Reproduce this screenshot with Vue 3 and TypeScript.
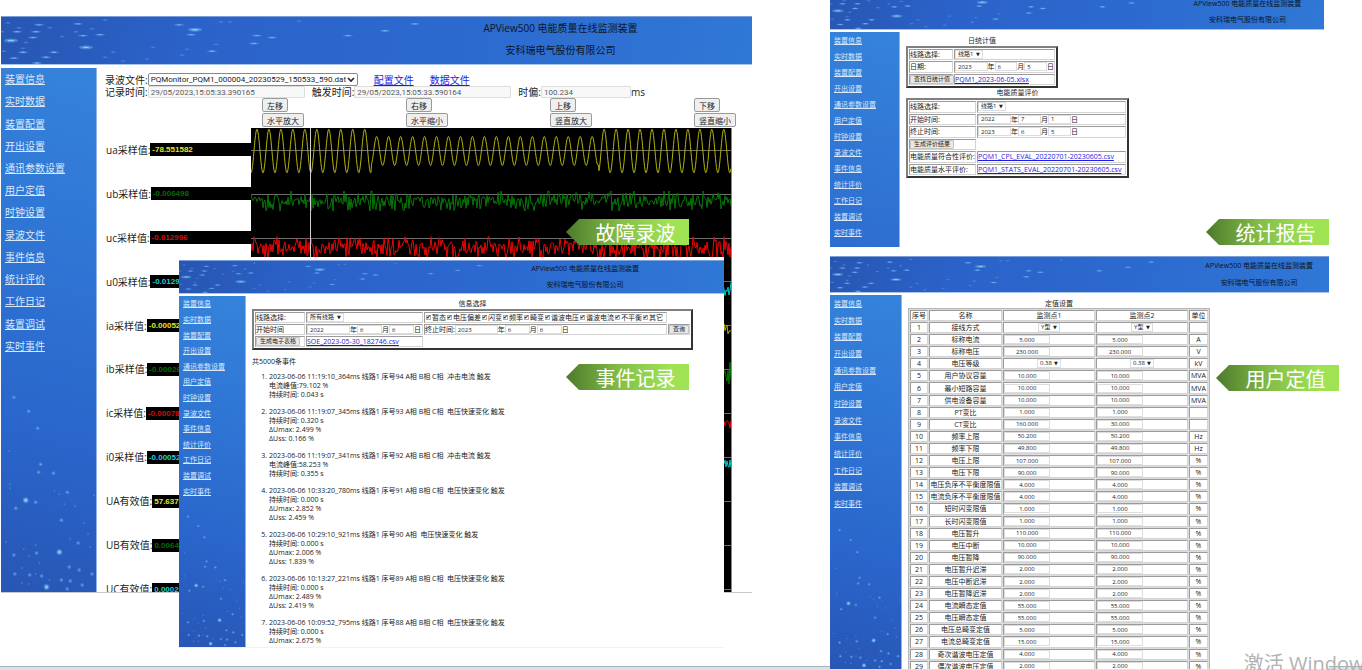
<script setup lang="ts">
type ScreenId = 'record' | 'events' | 'report' | 'settings'

interface Screen {
  id: ScreenId
  caption: string
  skyBox: string
  navBox: string
}

const screens: Screen[] = [
  { id: 'record', caption: '故障录波', skyBox: '0 0 751 48', navBox: '0 0 96 525' },
  { id: 'events', caption: '事件记录', skyBox: '0 0 751 48', navBox: '0 0 96 525' },
  { id: 'report', caption: '统计报告', skyBox: '0 10 629 38', navBox: '0 0 96 287' },
  { id: 'settings', caption: '用户定值', skyBox: '0 0 643 48', navBox: '0 0 96 525' },
]

const navItems = [
  '装置信息', '实时数据', '装置配置', '开出设置', '通讯参数设置', '用户定值', '时钟设置',
  '录波文件', '事件信息', '统计评价', '工作日记', '装置调试', '实时事件',
]

// x, y, size class (1 faint, 2 medium, 3 bright)
const skyDots: number[][] = [
  [7, 6, 1], [38, 8, 2], [18, 11, 1], [49, 11, 1], [1, 15, 1], [16, 15, 2], [35, 15, 2], [32, 21, 2],
  [10, 24, 3], [25, 26, 1], [3, 35, 1], [22, 32, 1], [22, 36, 2], [13, 42, 2], [45, 41, 2], [53, 36, 2],
  [36, 47, 2], [61, 20, 1], [77, 7, 2], [75, 15, 1], [82, 19, 2], [91, 12, 1], [99, 18, 2], [104, 3, 1],
  [85, 31, 3], [112, 36, 1], [104, 41, 1], [122, 45, 1], [146, 43, 1], [152, 31, 1], [178, 8, 2],
  [194, 13, 3], [190, 18, 2], [186, 33, 1], [181, 39, 1], [211, 35, 2], [215, 28, 1], [220, 5, 1],
  [229, 5, 1], [253, 27, 2], [256, 19, 2], [271, 21, 2], [298, 4, 1], [347, 19, 2], [384, 14, 2], [414, 7, 2],
]

const navDots: number[][] = [
  [13, 330, 2], [28, 344, 2], [37, 361, 2], [8, 384, 1], [40, 397, 2], [38, 405, 2], [53, 406, 2],
  [9, 417, 1], [9, 421, 1], [54, 424, 1], [59, 427, 1], [67, 425, 2], [94, 428, 1], [25, 433, 3],
  [35, 435, 2], [15, 441, 2], [64, 437, 1], [75, 439, 1], [61, 453, 2], [84, 456, 1], [88, 467, 1],
  [5, 475, 1], [35, 478, 1], [23, 482, 1], [13, 488, 2], [28, 489, 1], [36, 486, 2], [59, 485, 3],
  [70, 472, 1], [78, 476, 2], [90, 480, 1], [39, 496, 1], [69, 500, 2], [79, 503, 2], [92, 507, 2],
  [21, 501, 1], [14, 507, 2], [29, 508, 2], [35, 507, 1], [41, 509, 2], [49, 513, 1], [61, 513, 2],
  [70, 514, 2], [21, 516, 1], [28, 517, 1], [46, 520, 3], [82, 518, 2], [67, 522, 2],
]

const moves = ['左移', '右移', '上移', '下移']
const zooms = ['水平放大', '水平缩小', '竖直放大', '竖直缩小']

const channels = [
  { name: 'ua采样值:', value: '-78.551582', tone: 'yellow' },
  { name: 'ub采样值:', value: '-0.006498', tone: 'green' },
  { name: 'uc采样值:', value: '-0.012996', tone: 'red' },
  { name: 'u0采样值:', value: '-0.012996', tone: 'cyan' },
  { name: 'ia采样值:', value: '-0.000525', tone: 'yellow' },
  { name: 'ib采样值:', value: '-0.000262', tone: 'green' },
  { name: 'ic采样值:', value: '-0.000787', tone: 'red' },
  { name: 'i0采样值:', value: '-0.000525', tone: 'cyan' },
  { name: 'UA有效值:', value: '57.637878', tone: 'yellow' },
  { name: 'UB有效值:', value: '0.006498', tone: 'green' },
  { name: 'UC有效值:', value: '0.000262', tone: 'cyan' },
]

const axes = [22, 66, 110, 153, 197, 241, 285, 329, 373, 417, 461]

function sineTrace(): string {
  let d = ''
  for (let x = 0; x <= 480; x += 0.5) {
    const amp = x > 120 && x < 348 ? 14.5 : 21.8
    const y = 23 - amp * Math.cos((x * 2 * Math.PI) / 11.97)
    d += `${d ? 'L' : 'M'}${x} ${(46 - y).toFixed(1)}`
  }
  return d
}

function noiseTrace(center: number, spread: number, seed: number): string {
  let s = seed
  const next = () => {
    s = (s * 16807) % 2147483647
    return s / 2147483647
  }
  let d = ''
  for (let x = 0; x <= 480; x += 1) {
    const k = next() + next() + next() - 1.5
    const y = Math.max(-1, Math.min(1, k)) * spread * 1.25 + center
    d += `${d ? 'L' : 'M'}${x} ${y.toFixed(1)}`
  }
  return d
}

const traces = [
  { tone: 'yellow', d: sineTrace() },
  { tone: 'green', d: noiseTrace(73, 8, 11) },
  { tone: 'red', d: noiseTrace(120, 9, 29) },
  { tone: 'cyan', d: noiseTrace(163, 7, 37) },
  { tone: 'yellow', d: noiseTrace(201, 8, 53) },
  { tone: 'green', d: noiseTrace(244, 10, 71) },
  { tone: 'red', d: noiseTrace(298, 5, 97) },
  { tone: 'cyan', d: noiseTrace(336, 8, 113) },
]

const eventKinds = ['暂态', '电压偏差', '闪变', '频率', '畸变', '谐波电压', '谐波电流', '不平衡', '其它']

const events = [
  { head: '2023-06-06 11:19:10_364ms 线路1 序号94 A相 B相 C相\u00a0 冲击电流 触发', lines: ['电流峰值:79.102 %', '持续时间: 0.043 s'] },
  { head: '2023-06-06 11:19:07_345ms 线路1 序号93 A相 B相 C相\u00a0 电压快速变化 触发', lines: ['持续时间: 0.320 s', 'ΔUmax: 2.499 %', 'ΔUss: 0.166 %'] },
  { head: '2023-06-06 11:19:07_341ms 线路1 序号92 A相 B相 C相\u00a0 冲击电流 触发', lines: ['电流峰值:58.253 %', '持续时间: 0.355 s'] },
  { head: '2023-06-06 10:33:20_780ms 线路1 序号91 A相 B相 C相\u00a0 电压快速变化 触发', lines: ['持续时间: 0.000 s', 'ΔUmax: 2.852 %', 'ΔUss: 2.459 %'] },
  { head: '2023-06-06 10:29:10_921ms 线路1 序号90 A相\u00a0 电压快速变化 触发', lines: ['持续时间: 0.000 s', 'ΔUmax: 2.006 %', 'ΔUss: 1.839 %'] },
  { head: '2023-06-06 10:13:27_221ms 线路1 序号89 A相 B相 C相\u00a0 电压快速变化 触发', lines: ['持续时间: 0.000 s', 'ΔUmax: 2.489 %', 'ΔUss: 2.419 %'] },
  { head: '2023-06-06 10:09:52_795ms 线路1 序号88 A相 B相 C相\u00a0 电压快速变化 触发', lines: ['持续时间: 0.000 s', 'ΔUmax: 2.675 %'] },
]

const periodRows = [
  { name: '开始时间:', y: '2022', m: '7', d: '1' },
  { name: '终止时间:', y: '2023', m: '6', d: '5' },
]

type Setting = [name: string, first: string, second: string, unit: string]

const settings: Setting[] = [
  ['接线方式', 'Y型', 'Y型', ''],
  ['标称电流', '5.000', '5.000', 'A'],
  ['标称电压', '230.000', '230.000', 'V'],
  ['电压等级', '0.38', '0.38', 'kV'],
  ['用户协议容量', '10.000', '10.000', 'MVA'],
  ['最小短路容量', '10.000', '10.000', 'MVA'],
  ['供电设备容量', '10.000', '10.000', 'MVA'],
  ['PT变比', '1.000', '1.000', ''],
  ['CT变比', '160.000', '30.000', ''],
  ['频率上限', '50.200', '50.200', 'Hz'],
  ['频率下限', '49.800', '49.800', 'Hz'],
  ['电压上限', '107.000', '107.000', '%'],
  ['电压下限', '90.000', '90.000', '%'],
  ['电压负序不平衡度限值', '4.000', '4.000', '%'],
  ['电流负序不平衡度限值', '4.000', '4.000', '%'],
  ['短时闪变限值', '1.000', '1.000', '%'],
  ['长时闪变限值', '1.000', '1.000', '%'],
  ['电压暂升', '110.000', '110.000', '%'],
  ['电压中断', '10.000', '10.000', '%'],
  ['电压暂降', '90.000', '90.000', '%'],
  ['电压暂升迟滞', '2.000', '2.000', '%'],
  ['电压中断迟滞', '2.000', '2.000', '%'],
  ['电压暂降迟滞', '2.000', '2.000', '%'],
  ['电流瞬态定值', '55.000', '55.000', '%'],
  ['电压瞬态定值', '55.000', '55.000', '%'],
  ['电压总畸变定值', '5.000', '5.000', '%'],
  ['电流总畸变定值', '15.000', '15.000', '%'],
  ['奇次谐波电压定值', '4.000', '4.000', '%'],
  ['偶次谐波电压定值', '2.000', '2.000', '%'],
]

const isChoice = (name: string): boolean => name === '接线方式' || name === '电压等级'
</script>

<template>
  <div class="desk">
    <div class="taskbar"></div>
    <section v-for="s in screens" :key="s.id" class="screen" :class="s.id">
      <header class="banner">
        <svg class="sparks" :viewBox="s.skyBox" preserveAspectRatio="none" aria-hidden="true">
          <g v-for="(p, i) in skyDots" :key="i" :class="'lum' + p[2]">
            <ellipse :cx="p[0]" :cy="p[1]" :rx="p[2] * 2 + 1" :ry="p[2] === 3 ? 2 : 1" opacity="0.4" />
            <ellipse :cx="p[0]" :cy="p[1]" :rx="p[2] + 0.5" ry="0.7" />
          </g>
        </svg>
        <div class="title">
          <p>APView500 电能质量在线监测装置</p>
          <p>安科瑞电气股份有限公司</p>
        </div>
      </header>

      <div class="body">
        <nav class="side">
          <svg class="sparks" :viewBox="s.navBox" preserveAspectRatio="none" aria-hidden="true">
            <g v-for="(p, i) in navDots" :key="i" :class="'lum' + p[2]">
              <circle :cx="p[0]" :cy="p[1]" :r="p[2] === 3 ? 3 : p[2]" opacity="0.35" />
              <circle :cx="p[0]" :cy="p[1]" :r="p[2] === 3 ? 1.6 : 0.8" />
            </g>
          </svg>
          <ul>
            <li v-for="n in navItems" :key="n"><a href="#">{{ n }}</a></li>
          </ul>
        </nav>

        <main v-if="s.id === 'record'" class="content">
          <div class="line">
            <label for="wave-file">录波文件:</label>
            <span class="pick wide">
              <select id="wave-file"><option>PQMonitor_PQM1_000004_20230529_150533_590.dat</option></select>
              <svg viewBox="0 0 8 6" aria-hidden="true"><path d="M1 1l3 3 3-3" fill="none" stroke="#222" stroke-width="1.6" /></svg>
            </span>
            <a href="#" class="file">配置文件</a>
            <a href="#" class="file">数据文件</a>
          </div>
          <div class="line times">
            <label for="t-rec">记录时间:</label><input id="t-rec" class="stamp" value="29/05/2023,15:05:33.390165" disabled />
            <label for="t-trig">触发时间:</label><input id="t-trig" class="stamp" value="29/05/2023,15:05:33.590164" disabled />
            <label for="t-off">时偏:</label><input id="t-off" class="stamp short" value="100.234" disabled /><span>ms</span>
          </div>
          <div class="keys">
            <div v-for="m in moves" :key="m"><button type="button">{{ m }}</button></div>
            <div v-for="z in zooms" :key="z"><button type="button">{{ z }}</button></div>
          </div>
          <div class="scope">
            <div class="readouts">
              <div v-for="c in channels" :key="c.name" class="readout">
                <span>{{ c.name }}</span><b :class="c.tone">{{ c.value }}</b>
              </div>
            </div>
            <svg class="plot" viewBox="0 0 480 465" preserveAspectRatio="none" aria-hidden="true">
              <path v-for="a in axes" :key="a" :d="`M0 ${a}.5H480`" class="axis" />
              <path v-for="(t, i) in traces" :key="i" :d="t.d" class="trace" :class="t.tone" />
              <path d="M59.5 0V465" class="cursor" />
            </svg>
          </div>
        </main>

        <main v-else-if="s.id === 'events'" class="content">
          <table class="form">
            <caption>信息选择</caption>
            <tbody>
              <tr>
                <td class="c1"><label for="ev-line">线路选择:</label></td>
                <td class="c2">
                  <span class="pick"><select id="ev-line"><option>所有线路</option></select><i>▼</i></span>
                </td>
                <td>
                  <div class="checks">
                    <label v-for="k in eventKinds" :key="k"><input type="checkbox" checked />{{ k }}</label>
                  </div>
                </td>
                <td class="c4 none"></td>
              </tr>
              <tr>
                <td>开始时间</td>
                <td>
                  <div class="date">
                    <input class="yr" aria-label="开始年" value="2022" />年<input aria-label="开始月" value="6" />月<input aria-label="开始日" value="6" />日
                  </div>
                </td>
                <td>
                  <div class="date">
                    终止时间:<input class="yr" aria-label="终止年" value="2023" />年<input aria-label="终止月" value="6" />月<input aria-label="终止日" value="6" />日
                  </div>
                </td>
                <td><button type="button">查询</button></td>
              </tr>
              <tr>
                <td><button type="button">生成电子表格</button></td>
                <td><a href="#">SOE_2023-05-30_182746.csv</a></td>
                <td class="none"></td>
                <td class="none"></td>
              </tr>
            </tbody>
          </table>
          <p class="total">共5000条事件</p>
          <ol class="log">
            <li v-for="e in events" :key="e.head">
              <div>{{ e.head }}</div>
              <div v-for="l in e.lines" :key="l">{{ l }}</div>
            </li>
          </ol>
        </main>

        <main v-else-if="s.id === 'report'" class="content">
          <table class="form daily">
            <caption>日统计值</caption>
            <tbody>
              <tr>
                <td class="c1"><label for="day-line">线路选择:</label></td>
                <td><span class="pick"><select id="day-line"><option>线路1</option></select><i>▼</i></span></td>
              </tr>
              <tr>
                <td>日期:</td>
                <td>
                  <div class="date"><input class="yr" aria-label="年" value="2023" />年<input aria-label="月" value="6" />月<input aria-label="日" value="5" />日</div>
                </td>
              </tr>
              <tr>
                <td><button type="button">查找日统计值</button></td>
                <td><a href="#">PQM1_2023-06-05.xlsx</a></td>
              </tr>
            </tbody>
          </table>
          <table class="form quality">
            <caption>电能质量评价</caption>
            <tbody>
              <tr>
                <td class="c1"><label for="q-line">线路选择:</label></td>
                <td><span class="pick"><select id="q-line"><option>线路1</option></select><i>▼</i></span></td>
              </tr>
              <tr v-for="r in periodRows" :key="r.name">
                <td>{{ r.name }}</td>
                <td>
                  <div class="date">
                    <input class="yr" :aria-label="r.name + '年'" :value="r.y" />年<input :aria-label="r.name + '月'" :value="r.m" />月<input :aria-label="r.name + '日'" :value="r.d" />日
                  </div>
                </td>
              </tr>
              <tr>
                <td><button type="button">生成评价结果</button></td>
                <td class="none"></td>
              </tr>
              <tr>
                <td>电能质量符合性评价:</td>
                <td><a href="#">PQM1_CPL_EVAL_20220701-20230605.csv</a></td>
              </tr>
              <tr>
                <td>电能质量水平评价:</td>
                <td><a href="#">PQM1_STATS_EVAL_20220701-20230605.csv</a></td>
              </tr>
            </tbody>
          </table>
        </main>

        <main v-else class="content">
          <table class="values">
            <caption>定值设置</caption>
            <colgroup><col class="w1" /><col class="w2" /><col class="w3" /><col class="w3" /><col class="w4" /></colgroup>
            <thead>
              <tr><th>序号</th><th>名称</th><th>监测点1</th><th>监测点2</th><th>单位</th></tr>
            </thead>
            <tbody>
              <tr v-for="(r, i) in settings" :key="r[0]">
                <td>{{ i + 1 }}</td>
                <td>{{ r[0] }}</td>
                <td v-for="n in 2" :key="n" :class="{ entry: !isChoice(r[0]) }">
                  <span v-if="isChoice(r[0])" class="pick">
                    <select :aria-label="r[0] + n"><option>{{ r[n] }}</option></select><i>▼</i>
                  </span>
                  <input v-else :aria-label="r[0] + n" :value="r[n]" />
                </td>
                <td>{{ r[3] }}</td>
              </tr>
            </tbody>
          </table>
        </main>
      </div>
    </section>

    <div v-for="s in screens" :key="s.id" class="ribbon" :class="'tag-' + s.id">{{ s.caption }}</div>
    <div class="watermark">激活 Windows</div>
  </div>
</template>

<style>
body {
  margin: 0;
  background: #fff;
}
</style>

<style scoped>
* {
  box-sizing: border-box;
}

.desk {
  position: relative;
  display: grid;
  grid-template-columns: 830fr 532fr;
  grid-template-rows: 247px minmax(0, 1fr);
  height: 100vh;
  overflow: hidden;
  background: #fff;
  color: #222;
  font-family: "Open Sans", "Noto Sans CJK SC", sans-serif;
}

.taskbar {
  position: absolute;
  left: 0;
  right: 0;
  bottom: 0;
  height: 4px;
  background: #dbe1e8;
  border-top: 1px solid #a9b0b8;
}

.screen {
  position: relative;
  display: flex;
  flex-direction: column;
  overflow: hidden;
  background: #fff;
  font-size: 7px;
  line-height: 9px;
}

.record {
  grid-area: 1 / 1 / 3 / 2;
  align-self: start;
  height: 577px;
  margin: 16px 78px 0 1px;
  font-size: 10px;
  line-height: 12px;
  border-bottom: 1px solid #c8c8c8;
}

.events {
  grid-area: 1 / 1 / 3 / 2;
  align-self: start;
  height: 391px;
  margin: 257px 106px 0 179px;
  padding-top: 3px;
  border-bottom: 1px solid #f2f2f2;
}

.report {
  grid-area: 1 / 2 / 2 / 3;
  margin-right: 38px;
}

.settings {
  grid-area: 2 / 2 / 3 / 3;
  margin: 9px 33px 1px 0;
}

.banner {
  position: relative;
  flex: none;
  height: 49px;
  background: linear-gradient(100deg, #2856b3, #2b62c9 25%, #2c69cf 60%, #3078d6);
  border-top: 1px solid #7d9fd8;
  border-bottom: 1px solid #a9c4ec;
}

.events .banner {
  height: 34px;
}

.report .banner {
  height: 30px;
  border-top: 0;
}

.settings .banner {
  height: 37px;
}

.sparks {
  position: absolute;
  inset: 0;
  width: 100%;
  height: 100%;
}

.lum1 {
  fill: #5596e0;
  opacity: 0.7;
}

.lum2 {
  fill: #66b2ee;
}

.lum3 {
  fill: #7fd0f8;
}

.title {
  position: relative;
  padding-left: 49%;
  text-align: center;
  color: #0c1526;
}

.title p {
  margin: 0;
  line-height: 22px;
}

.events .title p {
  line-height: 16px;
}

.report .title {
  padding-left: 69%;
  margin-top: -4px;
}

.report .title p {
  line-height: 16px;
}

.settings .title {
  padding-left: 72%;
}

.settings .title p {
  line-height: 17px;
}

.body {
  display: flex;
  flex: 1;
  min-height: 0;
  margin-top: 3px;
}

.report .body,
.settings .body,
.events .body {
  margin-top: 2px;
}

.side {
  position: relative;
  flex: none;
  width: 96px;
  background: linear-gradient(195deg, #3583da, #2f75d4 35%, #2a65cb 70%, #2856b5);
  border-right: 1px solid #8fb4e8;
}

.events .side {
  width: 67px;
}

.report .side {
  width: 70px;
  background: linear-gradient(195deg, #3583da, #2d6dd0);
}

.settings .side {
  width: 72px;
}

.side ul {
  position: relative;
  display: grid;
  grid-auto-rows: 1fr;
  align-items: center;
  height: 289px;
  margin: 0;
  padding: 0 0 0 4px;
  list-style: none;
}

.side a {
  color: #d9e8fb;
}

.events .side ul {
  height: 203px;
}

.report .side ul {
  height: 208px;
}

.settings .side ul {
  height: 217px;
}

.content {
  flex: 1;
  min-width: 0;
}

a {
  color: #1d1de0;
}

input,
select,
button {
  margin: 0;
  font-family: inherit;
  font-size: 6px;
  line-height: 8px;
  color: #222;
}

input {
  min-width: 0;
  height: 9px;
  padding: 0 2px;
  border: 1px solid #ddd;
  background: #fff;
}

button {
  height: 9px;
  padding: 0 3px;
  border: 1px solid #c4c4c4;
  border-radius: 1px;
  background: #e8e8e8;
  white-space: nowrap;
  line-height: 7px;
}

.pick {
  display: inline-flex;
  align-items: center;
  height: 9px;
  padding: 0 2px;
  border: 1px solid #ddd;
  background: #fff;
  vertical-align: top;
}

.pick select {
  appearance: none;
  padding: 0;
  border: 0;
  background: transparent;
  line-height: 7px;
}

.pick i {
  margin-left: 2px;
  font: 5px/7px "DejaVu Sans", sans-serif;
}

/* waveform screen */
.line {
  display: flex;
  align-items: center;
  height: 13px;
  padding-left: 8px;
}

.record .line:first-child {
  margin-top: 5px;
}

.record .times {
  height: 12px;
}

.wide {
  width: 210px;
  height: 13px;
  justify-content: space-between;
  border: 1px solid #888;
  border-radius: 2px;
}

.pick.wide select {
  font-family: Roboto, sans-serif;
  font-size: 8px;
  line-height: 11px;
}

.wide svg {
  flex: none;
  width: 8px;
  height: 6px;
}

.file {
  margin-left: 16px;
}

.stamp {
  width: 157px;
  height: 12px;
  margin-right: 7px;
  font-family: Roboto, sans-serif;
  font-size: 8px;
  background: #f8f8f8;
  border-radius: 1px;
  color: #5a5a5a;
}

.short {
  width: 90px;
  margin-right: 0;
}

.keys {
  display: grid;
  grid-template-columns: repeat(3, 144fr) 58fr;
  grid-auto-rows: 15px;
  padding-left: 165px;
}

.keys div {
  display: flex;
}

.keys button {
  height: 14px;
  padding: 0 4px;
  border-color: #9a9a9a;
  border-radius: 2px;
  background: #efefef;
  font-size: 8px;
  line-height: 11px;
}

.scope {
  display: flex;
  padding: 0 20px 0 9px;
}

.readouts {
  display: grid;
  grid-auto-rows: 1fr;
  flex: none;
  width: 145px;
  height: 483px;
  align-items: center;
}

.readout {
  display: flex;
  align-items: center;
}

.readout b {
  flex: 1;
  height: 13px;
  padding-left: 2px;
  background: #000;
  font: bold 8px/13px "Liberation Sans", sans-serif;
}

b.yellow {
  color: #e6e61e;
}

b.green {
  color: #056b05;
}

b.red {
  color: #d80c0c;
}

b.cyan {
  color: #1ccfd8;
}

.plot {
  flex: 1;
  min-width: 0;
  height: 465px;
  background: #000;
  border-right: 1px solid #888;
}

.axis {
  stroke: #6e6e6e;
}

.cursor {
  stroke: #d0d0d0;
}

.trace {
  fill: none;
  stroke-width: 1;
}

.trace.yellow {
  stroke: #b3b30a;
}

.trace.green {
  stroke: #067806;
}

.trace.red {
  stroke: #ee0505;
}

.trace.cyan {
  stroke: #0cc;
}

/* form tables */
table {
  border-spacing: 1px;
  border-collapse: separate;
}

caption {
  height: 10px;
  line-height: 10px;
  white-space: nowrap;
}

td,
th {
  padding: 0;
  font-weight: normal;
  white-space: nowrap;
  border: 1px solid;
  border-color: #9b9b9b #d4d4d4 #d4d4d4 #9b9b9b;
}

.form {
  table-layout: fixed;
  border: 2px solid;
  border-color: #808080 #333 #333 #808080;
}

.form td {
  height: 11px;
}

.form td > a,
.form td > button {
  display: block;
}

.form td.none {
  border-color: transparent;
}

.events .form {
  width: 441px;
  margin: 3px 0 0 6px;
}

.events .c1 {
  width: 50px;
}

.events .c2 {
  width: 117px;
}

.events .c4 {
  width: 22px;
}

.date {
  display: flex;
  align-items: center;
}

.date input {
  width: 25px;
}

.date .yr {
  width: 43px;
}

.checks {
  display: flex;
  align-items: center;
}

.checks label {
  display: flex;
  align-items: center;
}

.checks input {
  position: relative;
  appearance: none;
  width: 5px;
  height: 5px;
  margin: 0 1px;
  padding: 0;
  border: 1px solid #b0b0b0;
}

.checks input:checked::after {
  content: "✔";
  position: absolute;
  left: -1px;
  top: -2px;
  font: 6px/6px "DejaVu Sans", sans-serif;
}

.total {
  margin: 7px 0 0 6px;
}

.log {
  margin: 6px 0 0;
  padding: 0 0 0 23px;
}

.log li {
  margin-bottom: 8px;
}

/* report screen */
.report .form {
  margin-left: 6px;
}

.report .date input {
  width: 23px;
}

.report .date .yr {
  width: 33px;
}

.daily {
  width: 152px;
  height: 42px;
  margin-top: 4px;
}

.daily .c1 {
  width: 44px;
}

.quality {
  width: 223px;
  height: 80px;
}

.quality .c1 {
  width: 67px;
}

/* settings screen */
.values {
  width: 302px;
  height: 366px;
  margin: 4px 0 0 6px;
  table-layout: fixed;
  text-align: center;
  border: 1px solid #b5b5b5;
  background: #dcdcdc;
}

.values caption {
  height: 9px;
  background: #fff;
}

.values td,
.values th {
  height: 11px;
  line-height: 9px;
  background: #fff;
}

.w1 {
  width: 18px;
}

.w2 {
  width: 73px;
}

.w3 {
  width: 92px;
}

.w4 {
  width: 19px;
}

.values .entry {
  text-align: left;
}

.values input {
  display: block;
  width: 46px;
  text-align: center;
}

/* captions over the screens */
.ribbon {
  position: absolute;
  width: 123px;
  height: 26px;
  padding-left: 16px;
  clip-path: polygon(0 50%, 13px 0, 100% 0, 100% 100%, 13px 100%);
  background: linear-gradient(90deg, #4d7a2c, #86bf48 45%, #9fe355 85%);
  color: #fff;
  font-size: 20px;
  line-height: 30px;
  text-align: center;
}

.tag-record {
  left: 566px;
  top: 219px;
}

.tag-events {
  left: 566px;
  top: 364px;
}

.tag-report {
  right: 33px;
  top: 219px;
}

.tag-settings {
  right: 23px;
  top: 365px;
}

.watermark {
  position: absolute;
  right: -12px;
  bottom: -6px;
  font-size: 20px;
  line-height: 24px;
  color: #b2b2b2;
  white-space: nowrap;
}
</style>
